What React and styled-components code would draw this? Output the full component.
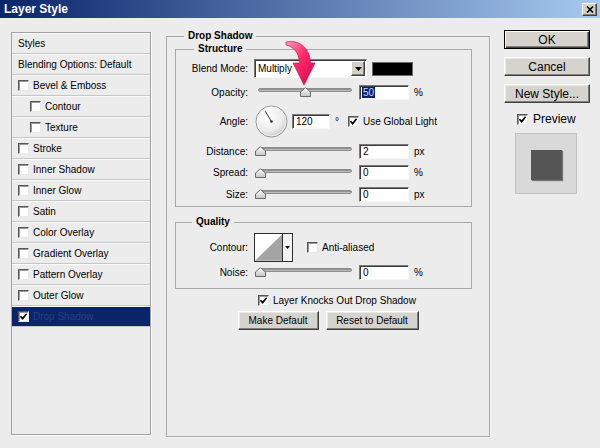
import React from "react";
import styled, { createGlobalStyle } from "styled-components";

const GlobalStyle = createGlobalStyle`
  html, body {
    margin: 0;
    padding: 0;
  }
  body {
    background: #ececec;
    font-family: "Liberation Sans", Arial, sans-serif;
    font-size: 10px;
    color: #000;
  }
`;

const Window = styled.div`
  position: relative;
  width: 600px;
  height: 448px;
  overflow: hidden;
  background: #ececec;
  display: flex;
  flex-direction: column;
`;

const TitleBar = styled.div`
  flex: none;
  height: 18px;
  padding: 0 3px 0 4px;
  display: flex;
  align-items: center;
  justify-content: space-between;
  background: linear-gradient(90deg, #0a246a 0%, #a6caf0 100%);
`;

const Title = styled.span`
  color: #fff;
  font-weight: bold;
  font-size: 12px;
`;

const CloseButton = styled.div`
  box-sizing: border-box;
  width: 15px;
  height: 13px;
  margin-top: 1px;
  display: flex;
  align-items: center;
  justify-content: center;
  background: #d4d0c8;
  border: 1px solid;
  border-color: #fff #404040 #404040 #fff;
  box-shadow: inset -1px -1px 0 #808080;
`;

const Body = styled.div`
  flex: 1;
  display: flex;
  align-items: flex-start;
  padding: 0 10px 0 11px;
`;

/* ---------- left list ---------- */

const StylesList = styled.div`
  box-sizing: border-box;
  flex: none;
  width: 140px;
  height: 403px;
  margin-top: 14px;
  border: 1px solid #a2a2a2;
  box-shadow: 1px 1px 0 #fafafa;
  background: #ececec;
`;

const ListItem = styled.div`
  box-sizing: border-box;
  height: 21px;
  display: flex;
  align-items: center;
  gap: 4px;
  padding-left: ${(p) => (p.$indent ? 18 : 6)}px;
  border-top: 1px solid #fafafa;
  border-bottom: 1px solid #c6c6c6;
  background: ${(p) => (p.$selected ? "#0a246a" : "transparent")};
  color: ${(p) => (p.$selected ? "#2b3f86" : "#000")};
  white-space: nowrap;
`;

/* ---------- common controls ---------- */

const Box = styled.span`
  box-sizing: border-box;
  flex: none;
  width: 11px;
  height: 11px;
  display: inline-flex;
  align-items: center;
  justify-content: center;
  background: #fff;
  border: 1px solid;
  border-color: #555 #e8e8e8 #e8e8e8 #555;
  box-shadow: inset 1px 1px 0 #9a9a9a;
`;

const Checkbox = ({ checked }) => (
  <Box>
    {checked && (
      <svg width="9" height="9" viewBox="0 0 9 9">
        <path d="M1.5 4.2 L3.6 6.6 L7.6 1.8" fill="none" stroke="#000" strokeWidth="1.7" />
      </svg>
    )}
  </Box>
);

const Field = styled.div`
  box-sizing: border-box;
  flex: none;
  width: ${(p) => p.$w}px;
  height: 15px;
  margin-left: ${(p) => p.$ml || 0}px;
  padding: 0 3px;
  display: flex;
  align-items: center;
  background: #fff;
  border: 1px solid;
  border-color: #7a7a7a #f6f6f6 #f6f6f6 #7a7a7a;
  box-shadow: inset 1px 1px 0 #3c3c3c;
  font-size: 10px;
  color: #000;
`;

const Selected = styled.span`
  background: #0a246a;
  color: #c9d4ff;
  padding: 0 1px;
  margin-left: -1px;
`;

const Unit = styled.span`
  margin-left: ${(p) => p.$ml || 5}px;
  font-size: 10px;
  color: #000;
  white-space: nowrap;
`;

const Button = styled.button`
  box-sizing: border-box;
  width: ${(p) => p.$w}px;
  height: 19px;
  padding: 0;
  font-family: inherit;
  font-size: ${(p) => p.$fs || 10}px;
  color: #000;
  background: #d6d3cd;
  border: 1px solid;
  border-color: ${(p) => (p.$default ? "#000" : "#fff #404040 #404040 #fff")};
  box-shadow: ${(p) =>
    p.$default
      ? "inset 1px 1px 0 #fff, inset -1px -1px 0 #404040, inset -2px -2px 0 #808080"
      : "inset -1px -1px 0 #808080, inset 1px 1px 0 #ebe9e5"};
`;

/* ---------- group boxes ---------- */

const OuterGroup = styled.fieldset`
  box-sizing: border-box;
  flex: none;
  width: 324px;
  height: 407px;
  margin: 12px 0 0 15px;
  padding: 1px 8px 0 8px;
  min-width: 0;
  border: 1px solid #a8a8a8;
  box-shadow: 1px 1px 0 #fafafa;
`;

const Legend = styled.legend`
  font-weight: bold;
  font-size: 10px;
  line-height: 12px;
  padding: 0 4px;
  margin-left: ${(p) => p.$offset}px;
`;

const InnerGroup = styled.fieldset`
  box-sizing: border-box;
  width: 297px;
  margin: ${(p) => p.$mt || 0}px 0 0 0;
  padding: ${(p) => p.$pt}px 0 ${(p) => p.$pb}px 0;
  min-width: 0;
  border: 1px solid #a8a8a8;
`;

const Row = styled.div`
  display: flex;
  align-items: center;
  height: ${(p) => p.$h}px;
  margin-top: ${(p) => p.$mt || 0}px;
`;

const Label = styled.span`
  flex: none;
  width: 72px;
  margin-right: 6px;
  text-align: right;
  white-space: nowrap;
`;

const Dropdown = styled.div`
  box-sizing: border-box;
  width: 113px;
  height: 19px;
  display: flex;
  align-items: stretch;
  background: #fff;
  border: 1px solid;
  border-color: #7a7a7a #f6f6f6 #f6f6f6 #7a7a7a;
  box-shadow: inset 1px 1px 0 #3c3c3c;
  padding: 1px;
`;

const DropdownText = styled.span`
  flex: 1;
  display: flex;
  align-items: center;
  padding-left: 2px;
  font-size: 10px;
`;

const DropButton = styled.span`
  box-sizing: border-box;
  width: 14px;
  display: flex;
  align-items: center;
  justify-content: center;
  background: #d4d0c8;
  border: 1px solid;
  border-color: #fff #404040 #404040 #fff;
  box-shadow: inset -1px -1px 0 #808080;
`;

const Swatch = styled.div`
  box-sizing: border-box;
  width: 41px;
  height: 14px;
  margin-left: 5px;
  background: #000;
  border: 1px solid #6a6a6a;
`;

const SliderBox = styled.div`
  position: relative;
  flex: none;
  box-sizing: border-box;
  width: 100px;
  height: 10px;
  padding: 1px 0 0 4px;
`;

const Track = styled.div`
  box-sizing: border-box;
  width: 94px;
  height: 4px;
  border-radius: 2px;
  border: 1px solid #8c8c8c;
  background: linear-gradient(#7c7c7c, #d2d2d2);
`;

const Thumb = styled.svg`
  position: absolute;
  top: 0;
  left: ${(p) => 6 + p.$value * 90 - 5.5}px;
`;

const Slider = ({ value }) => (
  <SliderBox>
    <Track />
    <Thumb $value={value} width="11" height="10" viewBox="0 0 11 10">
      <defs>
        <linearGradient id={`tg${value}`} x1="0" y1="0" x2="0" y2="1">
          <stop offset="0" stopColor="#ffffff" />
          <stop offset="1" stopColor="#c4c4c4" />
        </linearGradient>
      </defs>
      <path d="M0.5 9.5 V5 L5.5 0.7 L10.5 5 V9.5 Z" fill={`url(#tg${value})`} stroke="#6a6a6a" />
    </Thumb>
  </SliderBox>
);

const SliderRow = ({ label, value, field, unit, h }) => (
  <Row $h={h}>
    <Label>{label}</Label>
    <Slider value={value} />
    <Field $w={50} $ml={5}>{field}</Field>
    <Unit>{unit}</Unit>
  </Row>
);

const Dial = () => (
  <svg width="33" height="33" viewBox="0 0 33 33" style={{ marginLeft: 1, flex: "none" }}>
    <defs>
      <radialGradient id="dialg" cx="0.4" cy="0.35" r="0.7">
        <stop offset="0" stopColor="#ffffff" />
        <stop offset="0.65" stopColor="#ececec" />
        <stop offset="1" stopColor="#c4c4c4" />
      </radialGradient>
    </defs>
    <circle cx="16.5" cy="16.5" r="15.5" fill="url(#dialg)" stroke="#8e8e8e" />
    <circle cx="16.5" cy="16.5" r="14.5" fill="none" stroke="#fff" strokeOpacity="0.7" />
    <line x1="16.5" y1="16.5" x2="10.2" y2="6.2" stroke="#333" strokeWidth="1" />
    <circle cx="16.5" cy="16.5" r="1.3" fill="#333" />
  </svg>
);

const ContourBox = styled.div`
  box-sizing: border-box;
  flex: none;
  width: 39px;
  height: 29px;
  display: flex;
  background: #fff;
  border: 1px solid #2e2e2e;
`;

const ContourArrow = styled.div`
  box-sizing: border-box;
  width: 10px;
  display: flex;
  align-items: center;
  justify-content: center;
  border-left: 1px solid #2e2e2e;
  background: #f2f2f2;
`;

const Spacer = styled.span`
  display: inline-block;
  width: ${(p) => p.$w}px;
  flex: none;
`;

const CheckRow = styled.div`
  display: flex;
  align-items: center;
  height: 14px;
  margin-top: 4px;
  padding-left: 83px;
  gap: 4px;
  font-size: 10px;
`;

const ButtonRow = styled.div`
  display: flex;
  justify-content: center;
  gap: 7px;
  margin-top: 4px;
`;

/* ---------- right column ---------- */

const Side = styled.div`
  flex: none;
  width: 86px;
  margin: 12px 0 0 14px;
  display: flex;
  flex-direction: column;
  gap: 8px;
`;

const PreviewRow = styled.div`
  display: flex;
  align-items: center;
  gap: 5px;
  height: 14px;
  margin-top: 1px;
  padding-left: 13px;
  font-size: 12px;
`;

const PreviewBox = styled.div`
  box-sizing: border-box;
  width: 62px;
  height: 61px;
  margin: -1px 0 0 11px;
  padding-top: 3px;
  display: flex;
  align-items: center;
  justify-content: center;
  background: #d9d9d9;
  border: 1px solid #c2c2c2;
`;

const PreviewSquare = styled.div`
  width: 31px;
  height: 30px;
  background: #555;
  box-shadow: 1px 1px 1px rgba(0, 0, 0, 0.45);
`;

const Pointer = styled.svg`
  position: absolute;
  left: 283px;
  top: 38px;
`;

const DownTriangle = () => (
  <svg width="7" height="4" viewBox="0 0 7 4">
    <path d="M0 0 H7 L3.5 4 Z" fill="#000" />
  </svg>
);

const styleItems = [
  { label: "Bevel & Emboss" },
  { label: "Contour", indent: true },
  { label: "Texture", indent: true },
  { label: "Stroke" },
  { label: "Inner Shadow" },
  { label: "Inner Glow" },
  { label: "Satin" },
  { label: "Color Overlay" },
  { label: "Gradient Overlay" },
  { label: "Pattern Overlay" },
  { label: "Outer Glow" },
  { label: "Drop Shadow", checked: true, selected: true },
];

export default function App() {
  return (
    <>
      <GlobalStyle />
      <Window>
        <TitleBar>
          <Title>Layer Style</Title>
          <CloseButton>
            <svg width="8" height="7" viewBox="0 0 8 7">
              <path d="M1 0.5 L7 6.5 M7 0.5 L1 6.5" stroke="#000" strokeWidth="1.6" />
            </svg>
          </CloseButton>
        </TitleBar>

        <Body>
          <StylesList>
            <ListItem>Styles</ListItem>
            <ListItem>Blending Options: Default</ListItem>
            {styleItems.map((it) => (
              <ListItem key={it.label} $indent={it.indent} $selected={it.selected}>
                <Checkbox checked={it.checked} />
                {it.label}
              </ListItem>
            ))}
          </StylesList>

          <OuterGroup>
            <Legend $offset={9}>Drop Shadow</Legend>

            <InnerGroup $pt={4} $pb={1}>
              <Legend $offset={18}>Structure</Legend>
              <Row $h={19}>
                <Label>Blend Mode:</Label>
                <Dropdown>
                  <DropdownText>Multiply</DropdownText>
                  <DropButton>
                    <DownTriangle />
                  </DropButton>
                </Dropdown>
                <Swatch />
              </Row>
              <Row $h={22} $mt={3}>
                <Label>Opacity:</Label>
                <Slider value={0.5} />
                <Field $w={50} $ml={5}>
                  <Selected>50</Selected>
                </Field>
                <Unit>%</Unit>
              </Row>
              <Row $h={37}>
                <Label>Angle:</Label>
                <Dial />
                <Field $w={38} $ml={4}>120</Field>
                <Unit>°</Unit>
                <Spacer $w={9} />
                <Checkbox checked />
                <Unit $ml={4}>Use Global Light</Unit>
              </Row>
              <SliderRow h={22} label="Distance:" value={0} field="2" unit="px" />
              <SliderRow h={21} label="Spread:" value={0} field="0" unit="%" />
              <SliderRow h={22} label="Size:" value={0} field="0" unit="px" />
            </InnerGroup>

            <InnerGroup $mt={9} $pt={5} $pb={6}>
              <Legend $offset={16}>Quality</Legend>
              <Row $h={29}>
                <Label>Contour:</Label>
                <ContourBox>
                  <svg width="28" height="27" viewBox="0 0 28 27">
                    <path d="M0 27 L28 0 V27 Z" fill="#a4a4a4" />
                  </svg>
                  <ContourArrow>
                    <svg width="5" height="3" viewBox="0 0 5 3">
                      <path d="M0 0 H5 L2.5 3 Z" fill="#000" />
                    </svg>
                  </ContourArrow>
                </ContourBox>
                <Spacer $w={14} />
                <Checkbox />
                <Unit $ml={4}>Anti-aliased</Unit>
              </Row>
              <SliderRow h={20} label="Noise:" value={0} field="0" unit="%" />
            </InnerGroup>

            <CheckRow>
              <Checkbox checked />
              Layer Knocks Out Drop Shadow
            </CheckRow>
            <ButtonRow>
              <Button $w={81}>Make Default</Button>
              <Button $w={93}>Reset to Default</Button>
            </ButtonRow>
          </OuterGroup>

          <Side>
            <Button $w={86} $fs={12} $default>OK</Button>
            <Button $w={86} $fs={12}>Cancel</Button>
            <Button $w={86} $fs={12}>New Style...</Button>
            <PreviewRow>
              <Checkbox checked />
              Preview
            </PreviewRow>
            <PreviewBox>
              <PreviewSquare />
            </PreviewBox>
          </Side>
        </Body>

        <Pointer width="40" height="50" viewBox="0 0 40 50">
          <defs>
            <linearGradient id="arrowg" x1="0" y1="0" x2="1" y2="1">
              <stop offset="0" stopColor="#ff9cbb" />
              <stop offset="0.45" stopColor="#ff2a6c" />
              <stop offset="1" stopColor="#d4004a" />
            </linearGradient>
          </defs>
          <path
            d="M3 4 C15 1, 27 9, 27.5 25 L32 25 L21 47 L10 25 L16.5 25 C16 14, 10 8.5, 3 7 Z"
            fill="url(#arrowg)"
            stroke="#c8003f"
            strokeWidth="0.6"
          />
        </Pointer>
      </Window>
    </>
  );
}
